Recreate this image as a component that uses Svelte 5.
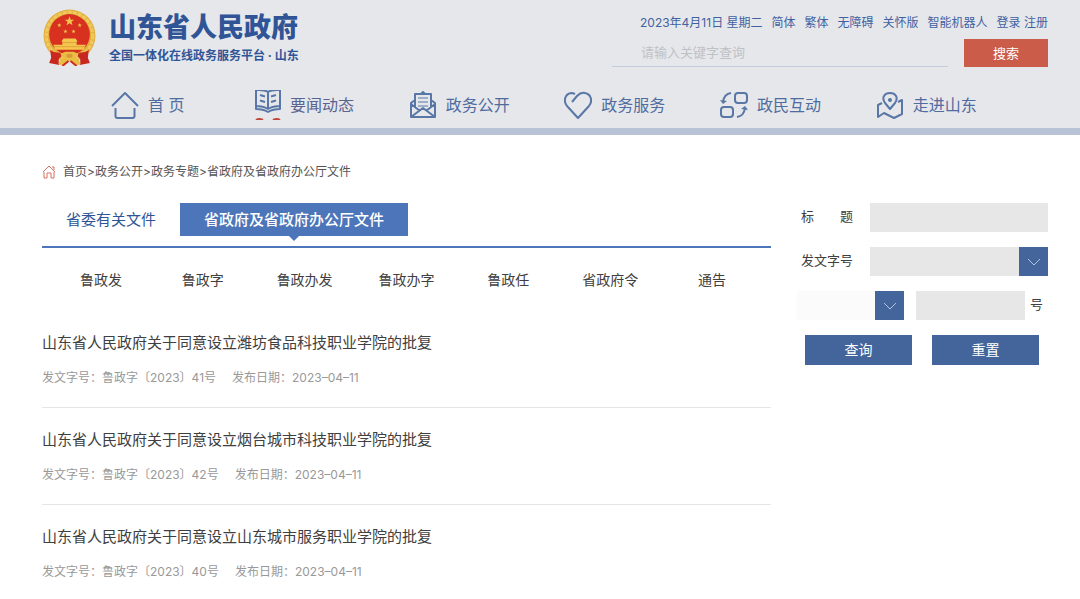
<script lang="ts">
  const topLinks = ['简体', '繁体', '无障碍', '关怀版', '智能机器人'];

  const navItems = [
    { name: 'home', label: '首 页' },
    { name: 'news', label: '要闻动态' },
    { name: 'open', label: '政务公开' },
    { name: 'service', label: '政务服务' },
    { name: 'interact', label: '政民互动' },
    { name: 'about', label: '走进山东' }
  ];

  const categories = ['鲁政发', '鲁政字', '鲁政办发', '鲁政办字', '鲁政任', '省政府令', '通告'];

  const documents = [
    { title: '山东省人民政府关于同意设立潍坊食品科技职业学院的批复', code: '鲁政字〔2023〕41号', date: '2023-04-11' },
    { title: '山东省人民政府关于同意设立烟台城市科技职业学院的批复', code: '鲁政字〔2023〕42号', date: '2023-04-11' },
    { title: '山东省人民政府关于同意设立山东城市服务职业学院的批复', code: '鲁政字〔2023〕40号', date: '2023-04-11' }
  ];

  const star = '0,-1 .24,-.31 .95,-.31 .38,.12 .59,.81 0,.38 -.59,.81 -.38,.12 -.95,-.31 -.24,-.31';

  let keyword = $state('');
  let title = $state('');
</script>

<header>
  <div class="top">
    <a class="brand" href="#home">
      <svg class="emblem" viewBox="0 0 52 56" aria-hidden="true">
        <circle cx="26" cy="26" r="25.5" fill="#e3b040" />
        <circle cx="26" cy="26" r="22.8" fill="none" stroke="#f0c95c" stroke-width="3" stroke-dasharray="4 1" />
        <circle cx="26" cy="25" r="20" fill="#d8311f" />
        <path d="M7 40 Q10 43 17 43 L18 47 Q14 48 16 55 L11 54 L6 53 L8 48Z M45 40 Q42 43 35 43 L34 47 Q38 48 36 55 L41 54 L46 53 L44 48Z" fill="#c9281f" />
        <g fill="#f3c64e">
          <polygon points={star} transform="translate(26 12) scale(5)" />
          <polygon points={star} transform="translate(16 16) scale(2.2)" />
          <polygon points={star} transform="translate(36 16) scale(2.2)" />
          <polygon points={star} transform="translate(22 22) scale(2.2)" />
          <polygon points={star} transform="translate(30 22) scale(2.2)" />
          <path d="M20 29 H32 L34 32 H33 V35 H42 L40 40 H12 L10 35 H19 V32 H18Z" />
        </g>
        <path d="M19 33 H33 M11 37 H41" stroke="#d98a32" stroke-width=".6" />
        <path d="M17 41 H35 L33 44 L30 42 H22 L19 44Z" fill="#cf2b20" />
        <path d="M17 44 L22 42 H30 L35 44 L31 47 L35 50 L37 54 Q34 56 31 54 L28 51 H24 L21 54 Q18 56 15 54 L17 50 L21 47Z" fill="#e9bd43" />
        <ellipse cx="26" cy="46" rx="3" ry="2" fill="#dc9736" />
        <path d="M25 51 L19 56 M27 51 L33 56" stroke="#cf2b20" stroke-width="2" />
      </svg>
      <span class="names">
        <strong>山东省人民政府</strong>
        <span>全国一体化在线政务服务平台 · 山东</span>
      </span>
    </a>

    <div class="tools">
      <div class="links">
        <span>2023年4月11日 星期二</span>
        {#each topLinks as link}
          <a href="#top">{link}</a>
        {/each}
        <span><a href="#login">登录</a> <a href="#register">注册</a></span>
      </div>
      <form class="search">
        <input type="text" aria-label="关键字" placeholder="请输入关键字查询" bind:value={keyword} />
        <button type="button">搜索</button>
      </form>
    </div>
  </div>

  <nav>
    {#each navItems as item}
      <a href="#{item.name}" class:news={item.name === 'news'}>
        <svg viewBox="0 0 28 30" aria-hidden="true">
          {#if item.name === 'home'}
            <path d="M1 16 L14 3 L27 16 M4.5 18 V26 Q4.5 28 6.5 28 H21.5 Q23.5 28 23.5 26 V18" />
          {:else if item.name === 'news'}
            <path d="M6 0 H3 V16 Q10 16 15 19 Q20 16 27 16 V0 H24 M6 0 Q12 0 15 2 Q18 0 24 0 M15 2 V19 M3 16 V19 Q10 19 15 22 Q20 19 27 19 V16 M7 5 L12 6.5 M7 10.500 L12 12 M18 6.5 L23 5 M18 12 L23 10.500" />
            <path class="red" d="M3 30 Q6 28 10 30 M20 30 Q24 28 27 30" />
          {:else if item.name === 'open'}
            <path d="M6 17 V4 H22 V17 M6 10 L2 13 V27 H26 V13 L22 10 M2 14 L11 21 M26 14 L17 21 M2 27 L14 18 L26 27 M12 4 L14 2 L16 4" />
            <path class="thin" d="M9 8 H19 M9 12 H19 M9 16 H19" />
          {:else if item.name === 'service'}
            <path d="M8 12 L13 6 Q17 2 21 3 C27 4 29 11 25 16 L14 28 L3 16 C-1 11 1 4 7 3 Q9 3 11 4" />
          {:else if item.name === 'interact'}
            <rect x="15" y="3" width="12" height="10" rx="3" />
            <rect x="1" y="17" width="12" height="10" rx="3" />
            <path d="M11 3 Q4 4 3 12 M17 27 Q24 26 25 18" />
            <path class="arrow" d="M0 10 L3 14 L7 11Z M21 19 L25 16 L28 20Z" />
          {:else}
            <path d="M14 19 L9 13 C5 7 9 3 14 3 C19 3 23 7 19 13Z M6 13 L2 15 V27 L8 23 L18 28 L26 24 V10 L22 12" />
            <circle class="dot" cx="14" cy="10" r="2" />
          {/if}
        </svg>
        <span>{item.label}</span>
      </a>
    {/each}
  </nav>
</header>

<main>
  <div class="breadcrumb">
    <svg viewBox="0 0 14 14" aria-hidden="true">
      <path d="M1 7 L7 1 L13 7 M10 2 H12 V5 M2 7 V13 H5 V8 H9 V13 H12 V7" />
    </svg>
    <span><a href="#home">首页</a>&gt;<a href="#open">政务公开</a>&gt;<a href="#topics">政务专题</a>&gt;<a href="#files">省政府及省政府办公厅文件</a></span>
  </div>

  <div class="columns">
    <section class="content">
      <div class="tabs">
        <a href="#committee">省委有关文件</a>
        <a href="#files" class="active">省政府及省政府办公厅文件</a>
      </div>
      <div class="categories">
        {#each categories as category}
          <a href="#category">{category}</a>
        {/each}
      </div>
      <ul>
        {#each documents as doc}
          <li>
            <a href="#document">{doc.title}</a>
            <p>
              <span>发文字号：{doc.code}</span>
              <span>发布日期：{doc.date.replaceAll('-', '–')}</span>
            </p>
          </li>
        {/each}
      </ul>
    </section>

    <form class="filter">
      <div class="row">
        <label for="title">标　　题</label>
        <input id="title" type="text" bind:value={title} />
      </div>
      <div class="row">
        <label for="code">发文字号</label>
        <div class="select">
          <select id="code"><option></option></select>
          <svg viewBox="0 0 29 29" aria-hidden="true"><path d="M9 12 L15 18 L21 12" /></svg>
        </div>
      </div>
      <div class="row">
        <div class="select year">
          <select aria-label="年份"><option></option></select>
          <svg viewBox="0 0 29 29" aria-hidden="true"><path d="M9 12 L15 18 L21 12" /></svg>
        </div>
        <input id="number" class="number" type="text" />
        <label class="unit" for="number">号</label>
      </div>
      <div class="actions">
        <button type="button">查询</button>
        <button type="reset">重置</button>
      </div>
    </form>
  </div>
</main>

<style>
  :global(body) {
    background: #fff;
    font-family: Inter, 'Noto Sans CJK SC', sans-serif;
    font-size: 12px;
    color: #404040;
  }

  :global(html) {
    overflow: hidden;
  }

  * {
    box-sizing: border-box;
  }

  a {
    color: inherit;
    text-decoration: none;
  }

  input,
  select,
  button {
    font: inherit;
    border: none;
    border-radius: 0;
    outline: none;
  }

  header {
    background: #e6e7eb;
    border-bottom: 7px solid #b8c4d5;
    color: #2f5597;
  }

  .top {
    display: flex;
    justify-content: space-between;
    padding: 9px 32px 0 43px;
  }

  .brand {
    display: flex;
    gap: 13px;
  }

  .emblem {
    width: 53px;
    height: 57px;
  }

  .names {
    display: flex;
    flex-direction: column;
    font-weight: 700;
  }

  .names strong {
    font-size: 27px;
    line-height: 37px;
  }

  .names span {
    line-height: 20px;
  }

  .tools {
    width: 436px;
  }

  .links {
    display: flex;
    justify-content: flex-end;
    gap: 9px;
    line-height: 28px;
    white-space: nowrap;
    color: #3f62a1;
  }

  .search {
    display: flex;
    gap: 16px;
    margin-top: 2px;
    font-size: 13px;
  }

  .search input {
    flex: 1;
    min-width: 0;
    height: 28px;
    padding: 0 29px 2px;
    background: transparent;
    border-bottom: 1px solid #c3cddb;
  }

  .search input::placeholder {
    color: #bfc1c5;
    opacity: 1;
  }

  .search button {
    width: 84px;
    height: 28px;
    padding: 0 0 2px;
    background: #cb5c4a;
    color: #fff;
  }

  nav {
    display: grid;
    grid-template-columns: repeat(6, 1fr);
    padding: 22px 76px 7px 70px;
  }

  nav a {
    display: flex;
    align-items: center;
    justify-content: center;
    gap: 9px;
    font-size: 16px;
    line-height: 32px;
    color: #4e6c9f;
  }

  nav a.news {
    color: #596590;
  }

  nav svg {
    width: 28px;
    height: 30px;
    fill: none;
    stroke: #5877a6;
    stroke-width: 2;
    stroke-linejoin: round;
  }

  nav .thin {
    stroke-width: 1;
  }

  nav .red {
    stroke: #c0453a;
  }

  nav .dot,
  nav .arrow {
    fill: #5877a6;
    stroke: none;
  }

  main {
    padding: 26px 32px 0 42px;
  }

  .breadcrumb {
    display: flex;
    align-items: center;
    gap: 7px;
    line-height: 22px;
    color: #555;
  }

  .breadcrumb svg {
    width: 14px;
    height: 14px;
    fill: none;
    stroke: #d9705f;
  }

  .columns {
    display: flex;
    align-items: flex-start;
    gap: 26px;
    margin-top: 20px;
  }

  .content {
    flex: 1;
  }

  .tabs {
    display: flex;
    height: 45px;
    border-bottom: 2px solid #4c76b9;
    font-size: 15px;
    line-height: 33px;
  }

  .tabs a {
    height: 33px;
    padding: 0 24px;
    color: #2f5597;
  }

  .tabs .active {
    position: relative;
    background: #4c76b9;
    color: #fff;
    font-weight: 500;
  }

  .tabs .active::after {
    content: '';
    position: absolute;
    top: 100%;
    left: 50%;
    margin-left: -5px;
    border: 5px solid transparent;
    border-top-color: #4c76b9;
    border-bottom: none;
  }

  .categories {
    display: grid;
    grid-template-columns: repeat(7, 1fr);
    padding: 20px 8px 19px;
    font-size: 14px;
    line-height: 24px;
    text-align: center;
  }

  ul {
    list-style: none;
    margin: 0;
    padding: 0;
  }

  li {
    padding: 20px 0 19px;
    border-bottom: 1px solid #e6e6e6;
  }

  li a {
    display: block;
    font-size: 15px;
    line-height: 24px;
  }

  li p {
    display: flex;
    gap: 16px;
    margin: 13px 0 0;
    line-height: 20px;
    color: #999;
  }

  .filter {
    display: flex;
    flex-direction: column;
    gap: 15px;
    width: 251px;
    font-size: 14px;
  }

  .row {
    display: flex;
    height: 29px;
  }

  .row label {
    width: 73px;
    padding-left: 4px;
    font-size: 13px;
    line-height: 27px;
    white-space: nowrap;
  }

  .row input,
  .row select {
    flex: 1;
    min-width: 0;
    width: 100%;
    height: 29px;
    padding: 0 8px;
    background: #e7e7e7;
    appearance: none;
  }

  .select {
    position: relative;
    flex: 1;
    display: flex;
  }

  .select svg {
    position: absolute;
    right: 0;
    top: 0;
    width: 29px;
    height: 29px;
    background: #44659b;
    fill: none;
    stroke: #b5c4dc;
    pointer-events: none;
  }

  .row .year {
    flex: none;
    width: 107px;
    margin-right: 12px;
  }

  .year select {
    background: #fbfbfb;
  }

  .row .unit {
    width: 23px;
    padding-left: 5px;
  }

  .actions {
    display: flex;
    gap: 20px;
    padding: 0 9px 0 8px;
  }

  .actions button {
    flex: 1;
    height: 30px;
    padding: 0 0 3px;
    background: #44659b;
    color: #fff;
  }
</style>
